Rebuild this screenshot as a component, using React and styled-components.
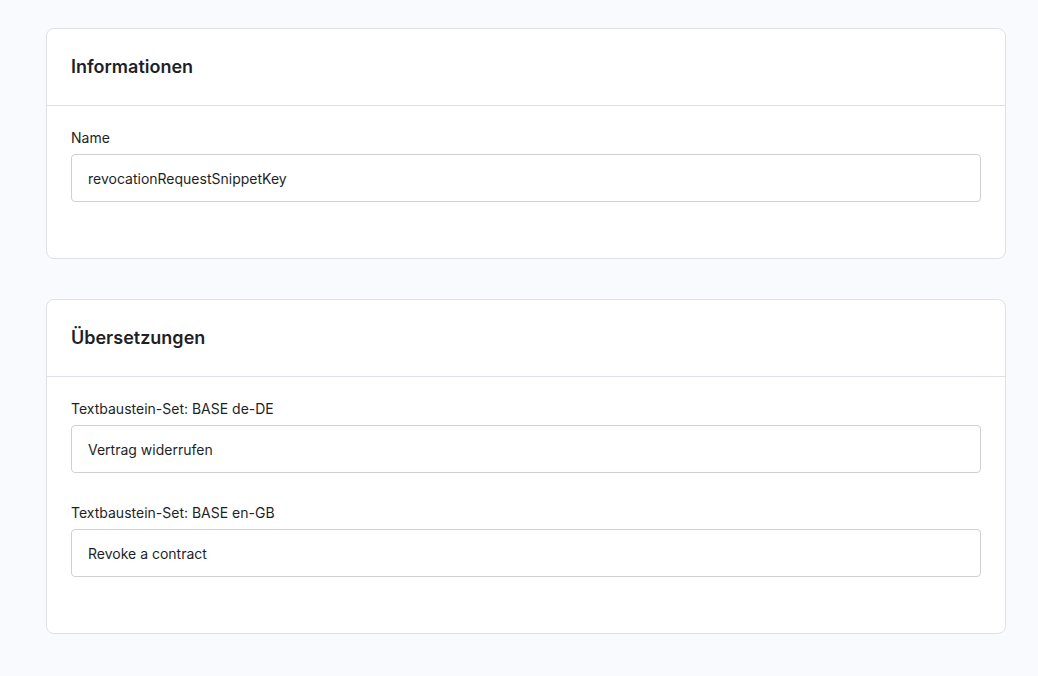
import React from "react";
import styled, { createGlobalStyle } from "styled-components";

const GlobalStyle = createGlobalStyle`
  html, body {
    margin: 0;
    padding: 0;
    background: #f9fafe;
    font-family: Inter, "Noto Sans", sans-serif;
    color: #1e1f27;
  }
  * {
    box-sizing: border-box;
  }
`;

const sections = [
  {
    title: "Informationen",
    fields: [{ label: "Name", value: "revocationRequestSnippetKey" }],
  },
  {
    title: "Übersetzungen",
    fields: [
      { label: "Textbaustein-Set: BASE de-DE", value: "Vertrag widerrufen" },
      { label: "Textbaustein-Set: BASE en-GB", value: "Revoke a contract" },
    ],
  },
];

function App() {
  return (
    <Page>
      <GlobalStyle />
      {sections.map((section) => (
        <Card key={section.title}>
          <CardHeader>
            <CardTitle>{section.title}</CardTitle>
          </CardHeader>
          <CardBody>
            {section.fields.map((field) => (
              <Field key={field.label}>
                <Label>{field.label}</Label>
                <Input type="text" defaultValue={field.value} readOnly />
              </Field>
            ))}
          </CardBody>
        </Card>
      ))}
    </Page>
  );
}

const Page = styled.div`
  display: flex;
  flex-direction: column;
  gap: 40px;
  padding: 28px 32px 40px 46px;
  min-height: 100vh;
`;

const Card = styled.section`
  width: 960px;
  background: #ffffff;
  border: 1px solid #e0e0e7;
  border-radius: 8px;
`;

const CardHeader = styled.div`
  height: 77px;
  padding: 0 24px;
  display: flex;
  align-items: center;
  border-bottom: 1px solid #e0e0e7;
`;

const CardTitle = styled.h2`
  margin: 0;
  font-size: 18px;
  font-weight: 600;
  line-height: 24px;
  color: #1e1f27;
`;

const CardBody = styled.div`
  padding: 24px 24px 24px;
  display: flex;
  flex-direction: column;
`;

const Field = styled.div`
  display: flex;
  flex-direction: column;
  margin-bottom: 32px;
`;

const Label = styled.label`
  font-size: 14px;
  line-height: 16px;
  color: #1e1f27;
  margin-bottom: 8px;
`;

const Input = styled.input`
  height: 48px;
  width: 100%;
  padding: 0 16px;
  font-family: Inter, "Noto Sans", sans-serif;
  font-size: 14px;
  color: #1e1f27;
  background: #ffffff;
  border: 1px solid #cfcfd7;
  border-radius: 4px;
  outline: none;
`;

export default App;
